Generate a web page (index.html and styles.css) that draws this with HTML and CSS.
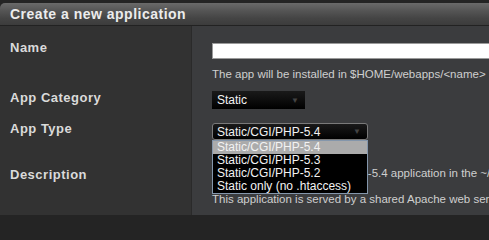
FILE: index.html
```html
<!DOCTYPE html>
<html>
<head>
<meta charset="utf-8">
<link rel="stylesheet" href="styles.css">
</head>
<body>
<div class="panel">
  <div class="header"><h1>Create a new application</h1></div>
  <div class="form">
    <div class="label row1">Name</div>
    <div class="field row1 clip">
      <div class="input"></div>
      <div class="hint">The app will be installed in $HOME/webapps/&lt;name&gt;</div>
    </div>

    <div class="label row2">App Category</div>
    <div class="field row2">
      <div class="select small"><span>Static</span><span class="arrow">▼</span></div>
    </div>

    <div class="label row3">App Type</div>
    <div class="field row3">
      <div class="select wide focus"><span>Static/CGI/PHP-5.4</span><span class="arrow">▼</span></div>
      <ul class="listbox">
        <li class="sel">Static/CGI/PHP-5.4</li>
        <li>Static/CGI/PHP-5.3</li>
        <li>Static/CGI/PHP-5.2</li>
        <li>Static only (no .htaccess)</li>
      </ul>
    </div>

    <div class="label row4">Description</div>
    <div class="field row4 clip">
      <p class="desc1">This makes a Static/CGI/PHP-5.4 application in the ~/webapps/&lt;name&gt; directory.</p>
      <p class="desc2">This application is served by a shared Apache web server.</p>
    </div>
  </div>
</div>
</body>
</html>
```
FILE: styles.css
```css
html, body {
  margin: 0;
  padding: 0;
  background: #242424;
  overflow: hidden;
}
body {
  width: 489px;
  height: 215px;
  font-family: "Liberation Sans", Arial, sans-serif;
}
.panel {
  padding-top: 3px;
}
.header {
  height: 23px;
  border-top-left-radius: 5px;
  background: linear-gradient(#6a6a6a 0%, #555 35%, #444 70%, #3c3c3c 100%);
  border-bottom: 1px solid #222;
  box-sizing: border-box;
}
.header h1 {
  margin: 0;
  padding: 2px 0 0 10px;
  font-size: 14px;
  line-height: 18px;
  font-weight: bold;
  letter-spacing: 0.5px;
  color: #ececec;
  white-space: nowrap;
}
.form {
  display: grid;
  grid-template-columns: 191px 1fr;
  grid-template-rows: 58px 32px 34px 1fr;
  height: 189px;
  background: #323232;
}
.label {
  background: #323232;
  padding-left: 10px;
  font-size: 13px;
  line-height: 16px;
  font-weight: bold;
  letter-spacing: 0.5px;
  color: #dadada;
}
.field {
  background: #3b3c3e;
  border-left: 1px solid #2a2a2a;
  padding-left: 20px;
  position: relative;
  min-width: 0;
}
.clip {
  overflow: hidden;
}
.row1.label { padding-top: 14px; }
.row1.field { padding-top: 17px; }
.row2.label { padding-top: 6px; }
.row2.field { padding-top: 7px; }
.row3.label { padding-top: 5px; }
.row3.field { padding-top: 7px; }
.row4.label { padding-top: 17px; }
.row4.field { padding-top: 16px; }

.input {
  height: 16px;
  box-sizing: border-box;
  width: 300px;
  background: #fff;
  border: 1px solid #9a9a9a;
}
.hint {
  margin-top: 8px;
  font-size: 11.5px;
  line-height: 14px;
  color: #cfcfcf;
  white-space: nowrap;
}
.select {
  box-sizing: border-box;
  display: flex;
  justify-content: space-between;
  align-items: center;
  background: linear-gradient(#1a1a1a, #000);
  color: #f2f2f2;
  font-size: 12px;
  padding: 0 6px 0 5px;
}
.select.small {
  width: 93px;
  height: 18px;
}
.select.wide {
  width: 156px;
  height: 17px;
}
.select.focus {
  border: 1px solid #7a7a7a;
  border-radius: 3px;
  padding-left: 4px;
}
.arrow {
  font-size: 8px;
  color: #444;
}
.listbox {
  position: absolute;
  left: 20px;
  top: 24px;
  width: 156px;
  margin: 0;
  padding: 0;
  list-style: none;
  box-sizing: border-box;
  background: #000;
  border: 1px solid #8496ab;
  z-index: 2;
}
.listbox li {
  height: 13px;
  line-height: 13px;
  font-size: 12px;
  color: #f2f2f2;
  padding-left: 4px;
  white-space: nowrap;
}
.listbox li.sel {
  background: #ababab;
}
.desc1, .desc2 {
  margin: 0;
  font-size: 11.5px;
  line-height: 14px;
  color: #cfcfcf;
  white-space: nowrap;
}
.desc1 {
  text-indent: 5px;
}
.desc2 {
  margin-top: 12px;
}
```
